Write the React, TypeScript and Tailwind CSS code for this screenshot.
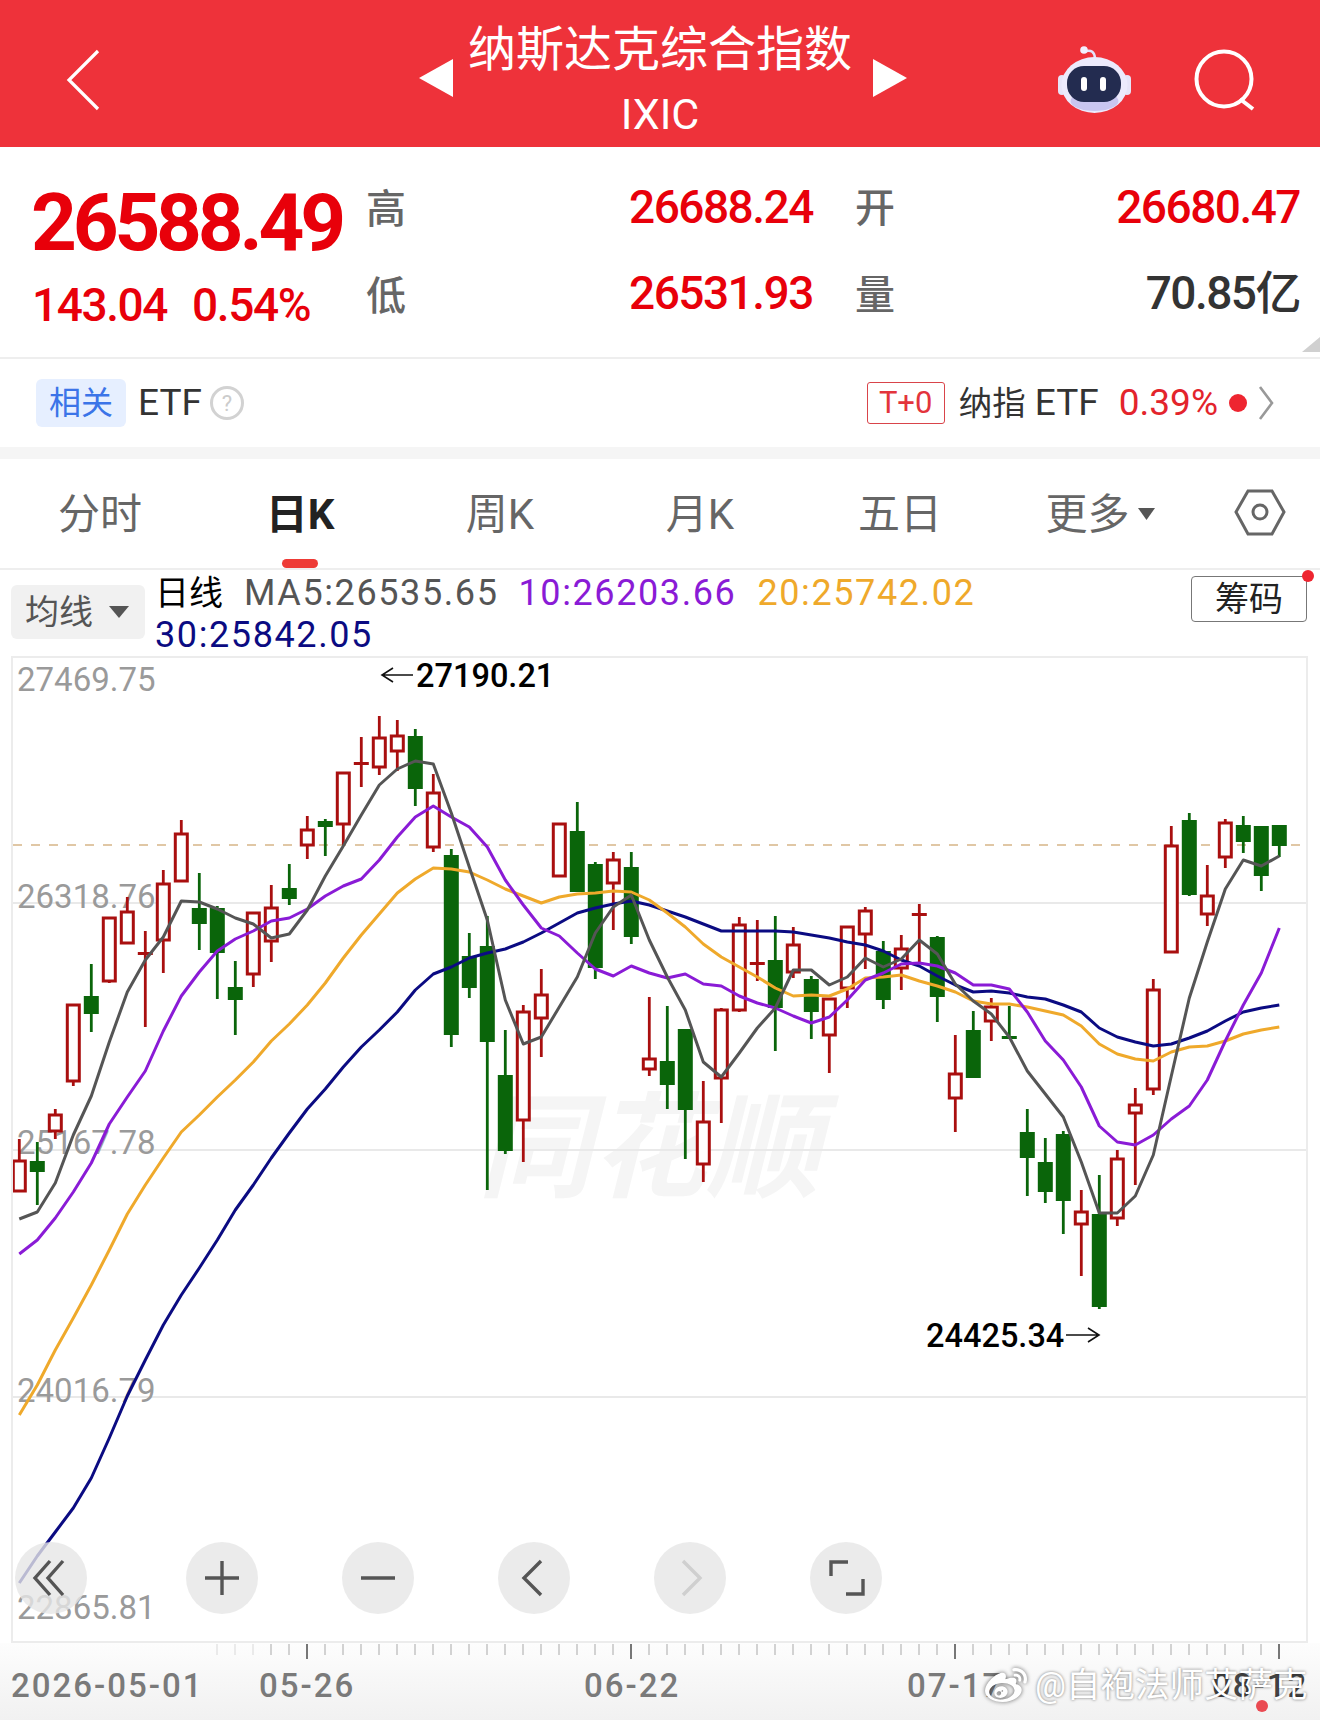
import { SiSinaweibo } from "react-icons/si";

// up, wickTop, wickBottom, bodyTop, bodyBottom
const candles: [number, number, number, number, number][] = [
  [1, 1139, 1192, 1161, 1191], [0, 1142, 1205, 1161, 1172], [1, 1109, 1139, 1115, 1131], [1, 1005, 1086, 1005, 1081],
  [0, 964, 1032, 996, 1014], [1, 918, 983, 918, 981], [1, 897, 943, 912, 943], [1, 931, 1027, 952, 954],
  [1, 870, 973, 884, 940], [1, 820, 881, 834, 881], [0, 873, 950, 908, 924], [0, 906, 999, 908, 953],
  [0, 961, 1035, 987, 1000], [1, 913, 987, 913, 974], [1, 885, 962, 908, 941], [0, 864, 905, 888, 899],
  [1, 816, 859, 830, 845], [0, 819, 856, 821, 827], [1, 772, 845, 773, 824], [1, 737, 787, 762, 765],
  [1, 716, 775, 738, 767], [1, 720, 771, 736, 751], [0, 729, 806, 736, 789], [1, 774, 852, 793, 847],
  [0, 849, 1047, 855, 1035], [0, 933, 998, 956, 988], [0, 916, 1190, 946, 1042], [0, 1030, 1154, 1075, 1151],
  [1, 1005, 1162, 1012, 1120], [1, 969, 1057, 995, 1018], [1, 824, 876, 824, 876], [0, 802, 892, 831, 892],
  [0, 862, 979, 864, 968], [1, 852, 930, 860, 883], [0, 852, 944, 867, 937], [1, 997, 1076, 1059, 1069],
  [0, 1006, 1109, 1061, 1085], [0, 1029, 1159, 1029, 1110], [1, 1081, 1182, 1122, 1164], [1, 1008, 1123, 1010, 1078],
  [1, 917, 1012, 925, 1010], [1, 920, 981, 962, 964], [0, 916, 1051, 960, 1008], [1, 927, 978, 945, 972],
  [0, 976, 1039, 979, 1012], [1, 998, 1073, 999, 1035], [1, 926, 1008, 927, 988], [1, 907, 969, 911, 934],
  [0, 941, 1009, 951, 1000], [1, 935, 990, 949, 968], [1, 904, 962, 913, 915], [0, 936, 1022, 937, 997],
  [1, 1035, 1132, 1074, 1098], [0, 1011, 1078, 1030, 1078], [1, 998, 1041, 1007, 1021], [0, 1006, 1038, 1036, 1038],
  [0, 1109, 1196, 1132, 1158], [0, 1138, 1203, 1162, 1192], [0, 1131, 1234, 1134, 1201], [1, 1190, 1276, 1212, 1224],
  [0, 1175, 1309, 1214, 1307], [1, 1150, 1226, 1159, 1218], [1, 1088, 1185, 1105, 1113], [1, 979, 1095, 990, 1089],
  [1, 826, 952, 846, 952], [0, 813, 896, 820, 895], [1, 865, 926, 896, 914], [1, 819, 868, 823, 857],
  [0, 816, 853, 825, 842], [0, 826, 891, 826, 876], [0, 825, 857, 825, 846],
];

const ma5 = [1219, 1212, 1183, 1135, 1096, 1042, 992, 960, 937, 901, 902, 909, 918, 924, 938, 934, 910, 876, 846, 815, 785, 769, 761, 764, 813, 867, 920, 1000, 1044, 1037, 1007, 977, 933, 907, 895, 940, 977, 1010, 1062, 1077, 1053, 1028, 1008, 970, 970, 985, 977, 958, 967, 959, 940, 954, 984, 1001, 1014, 1037, 1071, 1094, 1117, 1162, 1213, 1213, 1196, 1155, 1076, 998, 942, 889, 860, 866, 856];
const ma10 = [1254, 1240, 1218, 1192, 1163, 1124, 1097, 1071, 1031, 996, 972, 951, 939, 931, 921, 918, 909, 896, 886, 879, 860, 837, 817, 806, 817, 827, 847, 880, 905, 928, 936, 953, 969, 976, 966, 973, 978, 974, 984, 986, 996, 1003, 1008, 1016, 1023, 1017, 1000, 980, 973, 964, 963, 966, 973, 985, 985, 989, 1012, 1041, 1060, 1087, 1126, 1142, 1145, 1135, 1119, 1106, 1080, 1041, 1005, 973, 928];
const ma20 = [1415, 1385, 1350, 1318, 1285, 1250, 1214, 1185, 1158, 1132, 1115, 1097, 1080, 1062, 1041, 1024, 1005, 983, 958, 935, 914, 893, 879, 868, 869, 872, 880, 889, 896, 903, 897, 894, 893, 891, 892, 900, 913, 927, 944, 957, 967, 977, 988, 996, 995, 996, 989, 978, 977, 975, 981, 986, 992, 1001, 1004, 1004, 1007, 1011, 1015, 1026, 1044, 1054, 1059, 1061, 1052, 1047, 1046, 1041, 1034, 1030, 1027];
const ma30 = [1583, 1556, 1532, 1508, 1478, 1438, 1396, 1360, 1325, 1295, 1268, 1240, 1210, 1185, 1158, 1133, 1109, 1089, 1067, 1047, 1030, 1012, 990, 974, 967, 958, 953, 949, 942, 933, 923, 913, 908, 904, 901, 905, 911, 917, 924, 931, 931, 931, 931, 932, 935, 938, 942, 945, 951, 960, 966, 976, 985, 992, 991, 993, 997, 999, 1005, 1012, 1028, 1037, 1042, 1046, 1044, 1038, 1031, 1021, 1012, 1008, 1005];

const xAt = (i: number) => 19.3 + 18 * i;
const toPoints = (ys: number[]) => ys.map((y, i) => `${xAt(i)},${y}`).join(" ");

const maLines = [
  { ys: ma30, color: "#0b0b82" },
  { ys: ma20, color: "#efa92b" },
  { ys: ma10, color: "#8a1bd6" },
  { ys: ma5, color: "#555555" },
];

const yLabels = [
  ["27469.75", 691],
  ["26318.76", 908],
  ["25167.78", 1154],
  ["24016.79", 1402],
  ["22865.81", 1619],
] as const;

function Chart() {
  return (
    <div className="ml-[11px] h-[987px] w-[1297px] border-2 border-[#ececec] bg-white">
      <svg width="1293" height="983" viewBox="13 658 1293 983" className="block">
        <text x="478" y="1188" fontSize="114" fontWeight="700" fontStyle="italic" fill="#f5f5f5">同花顺</text>
        {[903, 1150, 1397].map((y) => (
          <line key={y} x1="13" x2="1306" y1={y} y2={y} stroke="#e9e9e9" strokeWidth="2" />
        ))}
        {yLabels.map(([label, y]) => (
          <text key={label} x="17" y={y} fontSize="33" fill="#9a9a9a">{label}</text>
        ))}
        <line x1="13" x2="1306" y1="845" y2="845" stroke="#d6b588" strokeWidth="1.6" strokeDasharray="9 9" />

        {candles.map(([up, wt, wb, bt, bb], i) => {
          const x = xAt(i);
          const color = up ? "#a90f0f" : "#0a650a";
          const thin = bb - bt < 4;
          return (
            <g key={i}>
              <line x1={x} x2={x} y1={wt} y2={wb} stroke={color} strokeWidth="2.8" />
              {thin ? (
                <rect x={x - 7.5} y={bt} width="15" height="3" fill={color} />
              ) : up ? (
                <rect x={x - 6} y={bt} width="12" height={bb - bt} fill="#fff" stroke={color} strokeWidth="3" />
              ) : (
                <rect x={x - 7.5} y={bt} width="15" height={bb - bt} fill={color} />
              )}
            </g>
          );
        })}

        {maLines.map((l) => (
          <polyline key={l.color} points={toPoints(l.ys)} fill="none" stroke={l.color} strokeWidth="3" strokeLinejoin="round" />
        ))}

        <path d="M413 675H383M393 668L382 675L393 682" fill="none" stroke="#111" strokeWidth="1.6" />
        <text x="416" y="687" fontSize="32.5" fontWeight="500" fill="#000">27190.21</text>
        <text x="926" y="1347" fontSize="32.5" fontWeight="500" fill="#000">24425.34</text>
        <path d="M1066 1335H1098M1088 1328L1099 1335L1088 1342" fill="none" stroke="#111" strokeWidth="1.6" />
      </svg>
    </div>
  );
}

function ZoomButton({ children, className = "" }: { children: React.ReactNode; className?: string }) {
  return (
    <div className={`flex h-[72px] w-[72px] items-center justify-center rounded-full bg-[#e6e6e6]/80 ${className}`}>
      <svg width="40" height="40" viewBox="0 0 40 40" fill="none" strokeWidth="3.4">
        {children}
      </svg>
    </div>
  );
}

function Axis() {
  const minors = Array.from({ length: 60 }, (_, i) => 217 + 18 * i);
  return (
    <div className="relative h-[77px] bg-gradient-to-b from-[#fdfdfd] to-[#f1f1f1]">
      <svg width="1320" height="77" viewBox="0 1643 1320 77" className="block">
        {minors.map((x, i) => (
          <line key={x} x1={x} x2={x} y1="1644" y2="1655" stroke={i < 3 ? "#e4e4e4" : "#c4c4c4"} strokeWidth="1.5" />
        ))}
        {[307, 631, 955, 1279].map((x) => (
          <line key={x} x1={x} x2={x} y1="1644" y2="1659" stroke="#777" strokeWidth="2" />
        ))}
        <g fontSize="33" fontWeight="500" fill="#7a7a7a" letterSpacing="2">
          <text x="11" y="1697">2026-05-01</text>
          <text x="259" y="1697">05-26</text>
          <text x="584" y="1697">06-22</text>
          <text x="907" y="1697">07-17</text>
          <text x="1212" y="1697" fill="#444">08-12</text>
        </g>
      </svg>
      {/* weibo mark stamped over the axis */}
      <div className="absolute left-[980px] top-[22px] flex h-[40px] items-center">
        <SiSinaweibo className="h-[42px] w-[52px] text-white drop-shadow-[0_0_2px_rgba(0,0,0,0.6)]" />
        <span className="ml-[3px] whitespace-nowrap text-[34.5px] leading-[40px] text-white [text-shadow:0_0_3px_rgba(0,0,0,0.55)]">@自袍法师艾萨克</span>
      </div>
      <div className="absolute left-[1256px] top-[57px] h-[12px] w-[12px] rounded-full bg-[#ea4a52]" />
    </div>
  );
}

export default function App() {
  const tabs = ["分时", "日K", "周K", "月K", "五日"];

  return (
    <div className="h-[1720px] w-[1320px] overflow-hidden bg-white font-[Roboto,'Noto_Sans_CJK_SC',sans-serif]">
      {/* Header */}
      <header className="grid h-[147px] grid-cols-[1fr_auto_1fr] bg-[#ee323a] text-white">
        <div className="flex items-center pl-[66px] pt-[12px]">
          <svg width="34" height="62" viewBox="0 0 34 62" fill="none" stroke="#fff" strokeWidth="3.2">
            <path d="M32 2L3 31L32 60" />
          </svg>
        </div>
        <div className="ml-[6px] flex items-center">
          <svg width="34" height="38" viewBox="0 0 34 38" className="mr-[15px] mt-[9px]"><polygon points="34,0 34,38 0,19" fill="#fff" /></svg>
          <div className="flex w-[384px] flex-col items-center self-start pt-[22px]">
            <div className="whitespace-nowrap text-[48px] leading-[56px]">纳斯达克综合指数</div>
            <div className="mt-[12px] text-[43px] leading-[48px]">IXIC</div>
          </div>
          <svg width="34" height="38" viewBox="0 0 34 38" className="ml-[21px] mt-[9px]"><polygon points="0,0 34,19 0,38" fill="#fff" /></svg>
        </div>
        <div className="flex items-center justify-end pr-[64px] pt-[12px]">
          <svg width="74" height="68" viewBox="1059 45 74 68">
            <path d="M1087 50Q1095 48 1096 57" fill="none" stroke="#e4e2fa" strokeWidth="2.5" />
            <circle cx="1085" cy="49" r="3.8" fill="#f2f0ff" />
            <rect x="1059" y="74" width="8" height="20" rx="4" fill="#e6e4f8" />
            <rect x="1124" y="74" width="8" height="20" rx="4" fill="#e6e4f8" />
            <ellipse cx="1095.5" cy="84" rx="33" ry="28" fill="#eceafc" />
            <ellipse cx="1095.5" cy="100" rx="24" ry="10" fill="#c9c6f0" />
            <rect x="1068" y="65" width="54" height="36" rx="17" fill="#232c50" />
            <rect x="1082" y="76" width="6" height="14" rx="3" fill="#fff" />
            <rect x="1101" y="76" width="6" height="14" rx="3" fill="#fff" />
          </svg>
          <svg width="62" height="62" viewBox="1193 48 62 62" className="ml-[62px]" fill="none" stroke="#fff" strokeWidth="4">
            <circle cx="1223" cy="78" r="27.5" />
            <path d="M1239 98L1252 108" />
          </svg>
        </div>
      </header>

      {/* Quote */}
      <section className="relative flex h-[210px] text-[#e8000a]">
        <div className="w-[368px] pl-[31px] pt-[36px]">
          <div className="text-[80px] font-bold leading-[80px] tracking-[-4.2px]">26588.49</div>
          <div className="mt-[20px] flex text-[46px] font-medium leading-[44px] tracking-[-1.4px]">
            <span className="ml-[1px]">143.04</span>
            <span className="ml-[25px]">0.54%</span>
          </div>
        </div>
        <div className="grid flex-1 grid-cols-[261px_227px_auto_1fr] grid-rows-[86px_86px] items-center pr-[20px] pt-[17px] text-[46px] font-medium tracking-[-1.5px]">
          <span className="-ml-[2px] pt-[6px] text-[40px] tracking-normal text-[#666]">高</span>
          <span>26688.24</span>
          <span className="-ml-[1px] pt-[4px] text-[40px] tracking-normal text-[#666]">开</span>
          <span className="text-right">26680.47</span>
          <span className="-ml-[2px] pt-[8px] text-[40px] tracking-normal text-[#666]">低</span>
          <span>26531.93</span>
          <span className="-ml-[1px] pt-[6px] text-[40px] tracking-normal text-[#666]">量</span>
          <span className="text-right text-[#333]">70.85亿</span>
        </div>
        <svg width="20" height="15" viewBox="0 0 20 15" className="absolute bottom-[5px] right-0">
          <polygon points="20,0 20,15 2,15" fill="#d0d0d0" />
        </svg>
      </section>
      <div className="h-[2px] bg-[#eeeeee]" />

      {/* ETF row */}
      <div className="flex h-[88px] items-center pl-[36px] text-[37px] text-[#333]">
        <span className="flex h-[48px] w-[90px] items-center justify-center rounded-md bg-[#e6efff] text-[32px] text-[#3b74e8]">相关</span>
        <span className="ml-[12px]">ETF</span>
        <span className="ml-[8px] flex h-[34px] w-[34px] items-center justify-center rounded-full border-[3px] border-[#d2d2d2] text-[22px] text-[#cccccc]">?</span>
        <span className="ml-auto flex h-[42px] w-[78px] items-center justify-center rounded-[3px] border border-[#d9444a] text-[31px] text-[#e3343c]">T+0</span>
        <span className="ml-[14px] whitespace-nowrap"><span className="text-[33.5px]">纳指</span> ETF</span>
        <span className="ml-[20px] text-[#e3242c]">0.39%</span>
        <span className="ml-[11px] h-[18px] w-[18px] rounded-full bg-[#ee2530]" />
        <svg width="16" height="36" viewBox="0 0 16 36" className="ml-[11px] mr-[46px]" fill="none" stroke="#999" strokeWidth="2.6">
          <path d="M2 2L14 18L2 34" />
        </svg>
      </div>
      <div className="h-[12px] bg-[#f5f5f5]" />

      {/* Tabs */}
      <nav className="grid h-[109px] grid-cols-[200px_200px_200px_200px_200px_200px_120px] text-[42px] leading-[48px] text-[#666]">
        {tabs.map((tab) => (
          <div key={tab} className={`relative pt-[32px] text-center ${tab === "日K" ? "font-bold text-[#222]" : ""}`}>
            {tab}
            {tab === "日K" && <div className="absolute bottom-0 left-[82px] h-[9px] w-[36px] rounded-full bg-[#ee3b36]" />}
          </div>
        ))}
        <div className="flex items-start justify-center pt-[32px]">
          更多
          <svg width="17" height="12" viewBox="0 0 17 12" className="ml-[8px] mt-[17px]"><polygon points="0,0 17,0 8.5,12" fill="#555" /></svg>
        </div>
        <div className="flex justify-center pt-[30px]">
          <svg width="52" height="48" viewBox="1234 489 52 48" fill="none" stroke="#666" strokeWidth="3">
            <polygon points="1236,512 1248,491 1272,491 1284,512 1272,534 1248,534" />
            <circle cx="1260" cy="512" r="7" />
          </svg>
        </div>
      </nav>
      <div className="h-[2px] bg-[#eeeeee]" />

      {/* MA legend */}
      <div className="flex h-[86px] items-start pl-[11px]">
        <div className="mt-[15px] flex h-[54px] w-[134px] items-center rounded-md bg-[#f1f1f1] pl-[14px] text-[34px] text-[#555]">
          均线
          <svg width="20" height="12" viewBox="0 0 20 12" className="ml-[16px]"><polygon points="0,0 20,0 10,12" fill="#555" /></svg>
        </div>
        <div className="ml-[10px] pt-[2px] text-[36px] leading-[42px] tracking-[1.6px]">
          <div className="flex whitespace-nowrap">
            <span className="mr-[21px] text-[34px] tracking-normal text-black">日线</span>
            <span className="mr-[20px] text-[#555]">MA5:26535.65</span>
            <span className="mr-[21px] text-[#8a1bd6]">10:26203.66</span>
            <span className="text-[#efa92b]">20:25742.02</span>
          </div>
          <div className="text-[#0b0b82]">30:25842.05</div>
        </div>
        <div className="relative ml-auto mr-[13px] mt-[6px] flex h-[46px] w-[116px] items-center justify-center rounded-[4px] border border-[#777] text-[34px] text-[#222]">
          筹码
          <span className="absolute -right-[8px] -top-[7px] h-[12px] w-[12px] rounded-full bg-[#ee2530]" />
        </div>
      </div>

      {/* Chart with zoom controls on top */}
      <div className="relative">
        <Chart />
        <div className="absolute left-[15px] top-[886px] flex gap-[84px]">
          <ZoomButton>
            <g stroke="#555"><path d="M19 3L4 20L19 37M32 3L17 20L32 37" /></g>
          </ZoomButton>
          <ZoomButton className="ml-[15px]">
            <g stroke="#555"><path d="M20 3V37M3 20H37" /></g>
          </ZoomButton>
          <ZoomButton>
            <g stroke="#555"><path d="M3 20H37" /></g>
          </ZoomButton>
          <ZoomButton>
            <g stroke="#555"><path d="M27 3L10 20L27 37" /></g>
          </ZoomButton>
          <ZoomButton>
            <g stroke="#cfcfcf"><path d="M13 3L30 20L13 37" /></g>
          </ZoomButton>
          <ZoomButton>
            <g stroke="#555"><path d="M5 18V4H22M37 21V36H20" /></g>
          </ZoomButton>
        </div>
        <Axis />
      </div>
    </div>
  );
}
